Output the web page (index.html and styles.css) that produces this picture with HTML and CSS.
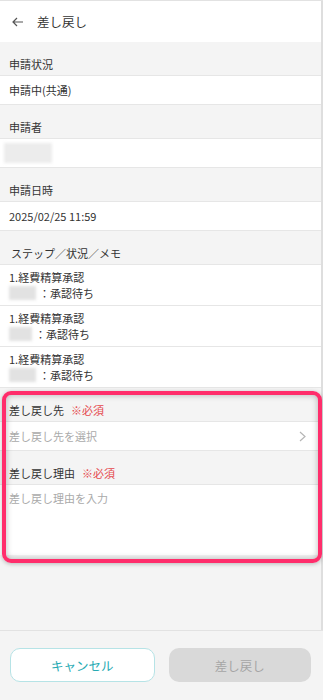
FILE: index.html
```html
<!DOCTYPE html>
<html lang="ja">

<head>
    <meta charset="UTF-8">
    <meta name="viewport" content="width=device-width, initial-scale=1.0">
    <title>差し戻し</title>
    <link rel="stylesheet" href="styles.css">
</head>

<body>
    <div class="page">
        <header class="topbar">
            <span class="back">
                <svg width="12" height="10" viewBox="0 0 12 10">
                    <path d="M5 1 L1 5 L5 9 M1 5 H11" fill="none" stroke="#555" stroke-width="1.2" />
                </svg>
            </span>
            <h1 class="title">差し戻し</h1>
        </header>

        <main class="content">
            <section class="field">
                <div class="field-label">申請状況</div>
                <div class="field-value">申請中(共通)</div>
            </section>
            <section class="field">
                <div class="field-label">申請者</div>
                <div class="field-value"><span class="masked masked-wide"></span></div>
            </section>
            <section class="field">
                <div class="field-label">申請日時</div>
                <div class="field-value">2025/02/25 11:59</div>
            </section>
            <section class="field">
                <div class="field-label label-steps">ステップ／状況／メモ</div>
                <div class="step-row">
                    <div class="step-line">1.経費精算承認</div>
                    <div class="step-line"><span class="masked"></span>：承認待ち</div>
                </div>
                <div class="step-row">
                    <div class="step-line">1.経費精算承認</div>
                    <div class="step-line"><span class="masked masked-short"></span>：承認待ち</div>
                </div>
                <div class="step-row">
                    <div class="step-line">1.経費精算承認</div>
                    <div class="step-line"><span class="masked"></span>：承認待ち</div>
                </div>
            </section>

            <div class="return-form">
                <div class="field-label">差し戻し先<span class="required">※必須</span></div>
                <div class="field-value select-row">
                    <span class="placeholder">差し戻し先を選択</span>
                    <svg width="7" height="11" viewBox="0 0 7 11">
                        <path d="M1 1 L6 5.5 L1 10" fill="none" stroke="#b5b5b5" stroke-width="1.2" />
                    </svg>
                </div>
                <div class="field-label">差し戻し理由<span class="required">※必須</span></div>
                <div class="reason-box">
                    <span class="placeholder">差し戻し理由を入力</span>
                </div>
                <div class="highlight"></div>
            </div>
        </main>

        <footer class="actions">
            <button class="btn btn-cancel">キャンセル</button>
            <button class="btn btn-submit">差し戻し</button>
        </footer>
    </div>
</body>

</html>
```

FILE: styles.css
```css
* {
    margin: 0;
    padding: 0;
    box-sizing: border-box;
}

body {
    font-family: "Noto Sans CJK JP", "Noto Sans", sans-serif;
    font-size: 11px;
    color: #333;
    background-color: #f4f4f4;
}

.page {
    width: 323px;
    height: 700px;
    display: flex;
    flex-direction: column;
    border-top: 1px solid #e2e2e2;
}

.topbar {
    height: 41px;
    flex-shrink: 0;
    background-color: #fff;
    display: flex;
    align-items: center;
    padding-left: 12px;
    border-right: 2px solid #dedede;
}

.back {
    display: flex;
    width: 25px;
}

.title {
    font-size: 12.5px;
    font-weight: normal;
    color: #333;
}

.content {
    flex: 1;
    border-right: 2px solid #dedede;
}

.field-label {
    height: 34px;
    display: flex;
    align-items: flex-end;
    padding: 0 9px 3px;
    line-height: 16px;
    border-bottom: 1px solid #e6e6e6;
}

.label-steps {
    padding-left: 11px;
}

.field-value {
    height: 29px;
    padding: 0 9px;
    background-color: #fff;
    border-bottom: 1px solid #e6e6e6;
    display: flex;
    align-items: center;
}

.masked {
    display: inline-block;
    width: 27px;
    height: 14px;
    background-color: #e2e2e2;
    filter: blur(1.5px);
    margin-right: 3px;
}

.masked-short {
    width: 23px;
}

.masked-wide {
    width: 48px;
    height: 20px;
    margin-left: -5px;
    background-color: #ececec;
}

.step-row {
    background-color: #fff;
    padding: 4px 9px 4px;
    border-bottom: 1px solid #e6e6e6;
}

.step-line {
    display: flex;
    align-items: center;
    height: 16px;
    line-height: 16px;
}

.return-form {
    position: relative;
}

.required {
    color: #e5484d;
    margin-left: 7px;
}

.placeholder {
    color: #aaa;
}

.select-row {
    justify-content: space-between;
    padding-right: 15px;
}

.reason-box {
    height: 70px;
    background-color: #fff;
    padding: 5px 9px;
    line-height: 16px;
}

.highlight {
    position: absolute;
    left: 2px;
    right: -1px;
    top: 3px;
    height: 172px;
    border: 4px solid #ff2d6b;
    border-radius: 9px;
    box-shadow: inset 0 0 6px rgba(0, 0, 0, 0.28), 0 1px 4px rgba(0, 0, 0, 0.25);
    pointer-events: none;
}

.actions {
    height: 70px;
    flex-shrink: 0;
    border-top: 1px solid #e2e2e2;
    background-color: #f4f4f4;
    display: flex;
    gap: 14px;
    padding: 17px 12px 0 10px;
}

.btn {
    flex: 1;
    height: 34px;
    border-radius: 10px;
    font-family: inherit;
    font-size: 12.5px;
    cursor: pointer;
}

.btn-cancel {
    background-color: #fff;
    border: 1px solid #b6e3e6;
    color: #27aab3;
}

.btn-submit {
    background-color: #d9d9d9;
    border: none;
    color: #a5a5a5;
}
```
